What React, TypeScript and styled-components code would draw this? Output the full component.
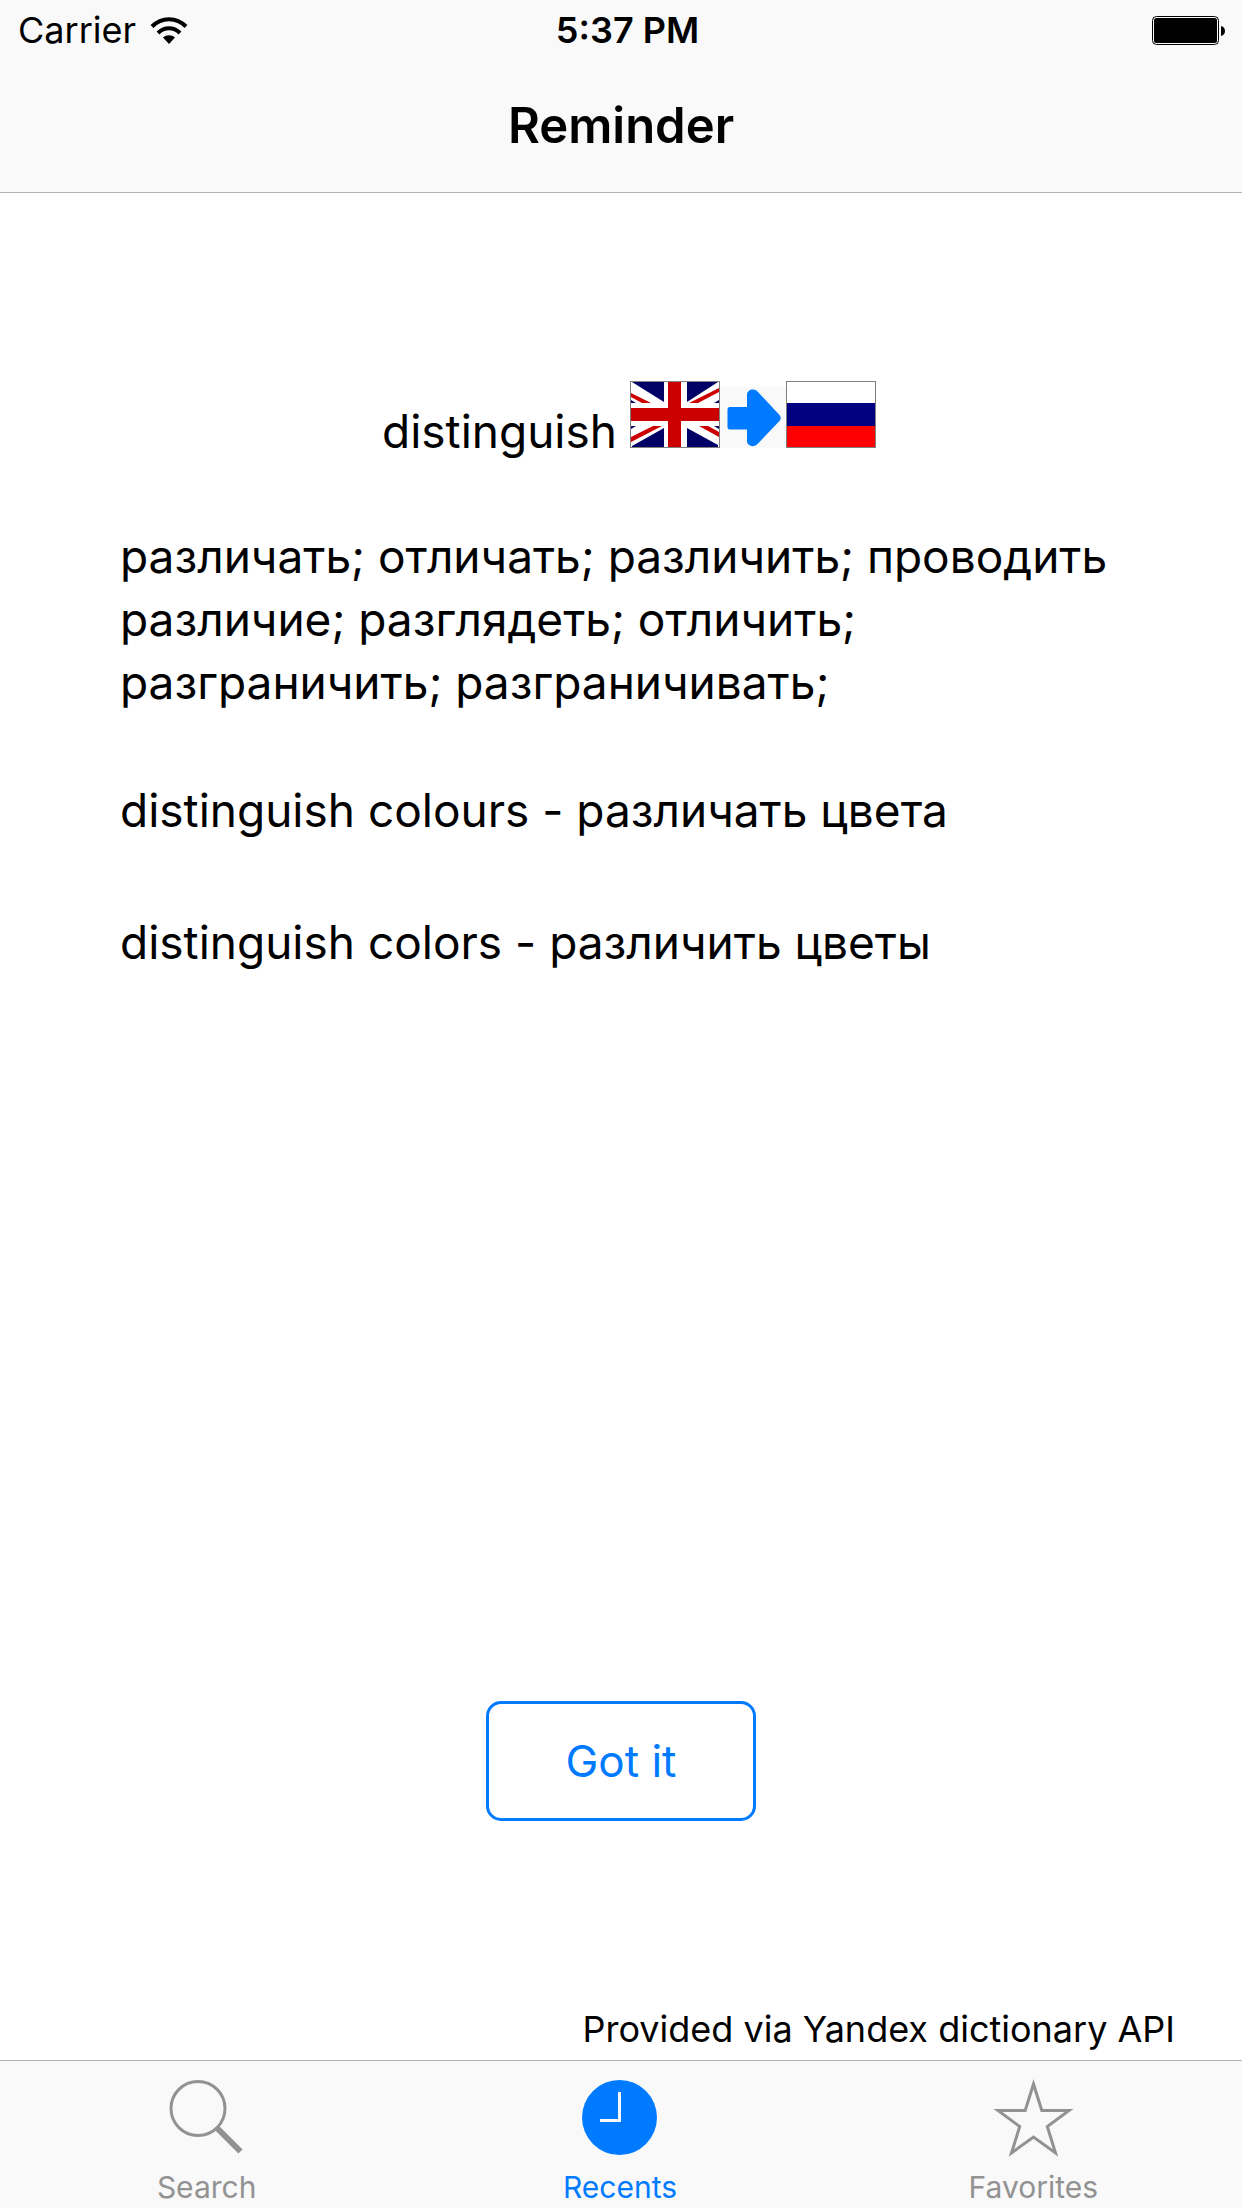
import React from "react";
import styled, { createGlobalStyle } from "styled-components";

const BLUE = "#007aff";
const GREY = "#929292";

const GlobalStyle = createGlobalStyle`
  * { box-sizing: border-box; }
  body {
    margin: 0;
    background: #fff;
    color: #000;
    font-family: Inter, "Noto Sans", sans-serif;
  }
  h1, h2, p, ul { margin: 0; padding: 0; font-weight: 400; }
`;

const Screen = styled.div`
  display: flex;
  flex-direction: column;
  min-height: 100vh;
`;

const Header = styled.header`
  background: #f9f9f9;
  border-bottom: 1px solid #b2b2b2;
`;

const StatusBar = styled.div`
  display: grid;
  grid-template-columns: 1fr auto 1fr;
  align-items: center;
  height: 61px;
  padding: 0 17px 0 18px;
  font-size: 36px;
  line-height: 43px;
`;

const Carrier = styled.div`
  display: flex;
  align-items: center;
  gap: 14px;
`;

const Clock = styled.time`
  padding-left: 12px;
  font-weight: 600;
`;

const BatterySlot = styled.div`
  display: flex;
  justify-content: flex-end;
`;

const Title = styled.h1`
  height: 131px;
  padding-top: 34px;
  text-align: center;
  font-size: 49px;
  font-weight: 600;
  line-height: 62px;
`;

const Main = styled.main`
  flex: 1;
  display: flex;
  flex-direction: column;
  padding-top: 188px;
`;

const WordRow = styled.div`
  display: flex;
  align-items: flex-end;
  justify-content: center;
  padding-left: 16px;
`;

const Word = styled.h2`
  margin: 0 13px -15px 0;
  font-size: 46px;
  line-height: 63px;
`;

const Article = styled.section`
  display: flex;
  flex-direction: column;
  gap: 65px;
  padding: 77px 120px 0;
  font-size: 46px;
  line-height: 63px;
`;

const Examples = styled.ul`
  display: flex;
  flex-direction: column;
  gap: 69px;
  list-style: none;
`;

const Actions = styled.div`
  display: flex;
  justify-content: center;
  margin-top: auto;
`;

const GotIt = styled.button`
  width: 270px;
  height: 120px;
  border: 3px solid ${BLUE};
  border-radius: 15px;
  background: transparent;
  color: ${BLUE};
  font-family: inherit;
  font-size: 44px;
  cursor: pointer;
`;

const Credit = styled.p`
  padding: 187px 67px 9px 0;
  text-align: right;
  font-size: 36px;
  line-height: 43px;
`;

const TabBar = styled.nav`
  display: flex;
  height: 148px;
  padding-right: 2px;
  border-top: 1px solid #b2b2b2;
  background: #f9f9f9;
`;

const Tab = styled.a<{ $active?: boolean }>`
  flex: 1;
  display: flex;
  flex-direction: column;
  align-items: center;
  gap: 14px;
  padding-top: 19px;
  color: ${(p) => (p.$active ? BLUE : GREY)};
  font-size: 30px;
  line-height: 36px;
  text-decoration: none;
`;

const WifiIcon = () => (
  <svg width="38" height="28" viewBox="0 0 38 28" aria-hidden="true">
    <g fill="none" stroke="#000" strokeWidth="4">
      <path d="M2 9.500C11.500 -0.300 26.500 -0.300 36 9.500" />
      <path d="M8 16C14.500 9.700 23.500 9.700 30 16" />
    </g>
    <path d="M13 20.500C16.500 17.400 21.500 17.400 25 20.500L19 27Z" />
  </svg>
);

const BatteryIcon = () => (
  <svg width="73" height="29" viewBox="0 0 73 29" role="img" aria-label="Battery full">
    <rect x="0.500" y="0.500" width="66" height="28" rx="4" fill="none" stroke="#000" />
    <rect x="2" y="2" width="63" height="25" rx="2.500" />
    <path d="M69 10C74.300 11 74.300 19 69 20Z" />
  </svg>
);

const UkFlag = () => (
  <svg width="90" height="67" viewBox="0 0 90 67" role="img" aria-label="English">
    <rect width="90" height="67" fill="#fff" />
    <path
      d="M2 1H34V21ZM88 1H57V21ZM34 66V47L2 65V66ZM57 66V47L88 64V66ZM1 19L6 22H1ZM89 19L84 22H89ZM1 48L6 45H1ZM89 48L84 45H89Z"
      fill="#000066"
    />
    <path
      d="M1 12L21 22H12L1 16ZM89 7L59 22H68L89 11ZM1 56L23 45H32L1 61ZM89 56L69 45H78L89 51Z"
      fill="#cc0000"
    />
    <path d="M0 27H38V0H51V27H90V40H51V67H38V40H0Z" fill="#cc0000" />
    <rect x="0.500" y="0.500" width="89" height="66" fill="none" stroke="#808080" />
  </svg>
);

const RuFlag = () => (
  <svg width="90" height="67" viewBox="0 0 90 67" role="img" aria-label="Russian">
    <rect width="90" height="67" fill="#fff" />
    <rect y="22" width="90" height="23" fill="#000080" />
    <rect y="45" width="90" height="22" fill="#ff0000" />
    <rect x="0.500" y="0.500" width="89" height="66" fill="none" stroke="#808080" />
  </svg>
);

const ArrowIcon = () => (
  <svg width="66" height="61" viewBox="0 0 66 61" role="img" aria-label="to">
    <rect width="66" height="61" fill="#f9f9f9" />
    <path
      d="M10 20H27V8C27 2.500 34 1 37.500 4.500L59.500 28Q62 31 59.500 34L37.500 57C34 61 27 59 27 54V42.500H10Q7.500 42.500 7.500 40V22.500Q7.500 20 10 20Z"
      fill={BLUE}
    />
  </svg>
);

const SearchIcon = () => (
  <svg width="75" height="75" viewBox="0 0 75 75" aria-hidden="true">
    <g fill="none" stroke="currentColor">
      <circle cx="29" cy="28.500" r="27" strokeWidth="3" />
      <path d="M48 48L71.500 71.500" strokeWidth="6" />
    </g>
  </svg>
);

const ClockIcon = () => (
  <svg width="75" height="75" viewBox="0 0 75 75" aria-hidden="true">
    <circle cx="37.500" cy="37.500" r="37.500" fill="currentColor" />
    <path d="M37.500 12V40.500H18" fill="none" stroke="#f9f9f9" strokeWidth="3" />
  </svg>
);

const StarIcon = () => (
  <svg width="81" height="75" viewBox="0 0 81 75" overflow="visible" aria-hidden="true">
    <path
      d="M40.500 4L48.800 30.500H76L54.300 46.500L62.500 73L40.500 57L18.500 73L26.700 46.500L5 30.500H32.200Z"
      fill="none"
      stroke="currentColor"
      strokeWidth="3"
    />
  </svg>
);

export default function App() {
  return (
    <Screen>
      <GlobalStyle />
      <Header>
        <StatusBar>
          <Carrier>
            <span>Carrier</span>
            <WifiIcon />
          </Carrier>
          <Clock>5:37 PM</Clock>
          <BatterySlot>
            <BatteryIcon />
          </BatterySlot>
        </StatusBar>
        <Title>Reminder</Title>
      </Header>
      <Main>
        <WordRow>
          <Word>distinguish</Word>
          <UkFlag />
          <ArrowIcon />
          <RuFlag />
        </WordRow>
        <Article>
          <p>
            различать; отличать; различить; проводить различие; разглядеть; отличить;
            разграничить; разграничивать;
          </p>
          <Examples>
            <li>distinguish colours - различать цвета</li>
            <li>distinguish colors - различить цветы</li>
          </Examples>
        </Article>
        <Actions>
          <GotIt type="button">Got it</GotIt>
        </Actions>
        <Credit>Provided via Yandex dictionary API</Credit>
      </Main>
      <TabBar>
        <Tab href="#search">
          <SearchIcon />
          Search
        </Tab>
        <Tab href="#recents" $active aria-current="page">
          <ClockIcon />
          Recents
        </Tab>
        <Tab href="#favorites">
          <StarIcon />
          Favorites
        </Tab>
      </TabBar>
    </Screen>
  );
}
